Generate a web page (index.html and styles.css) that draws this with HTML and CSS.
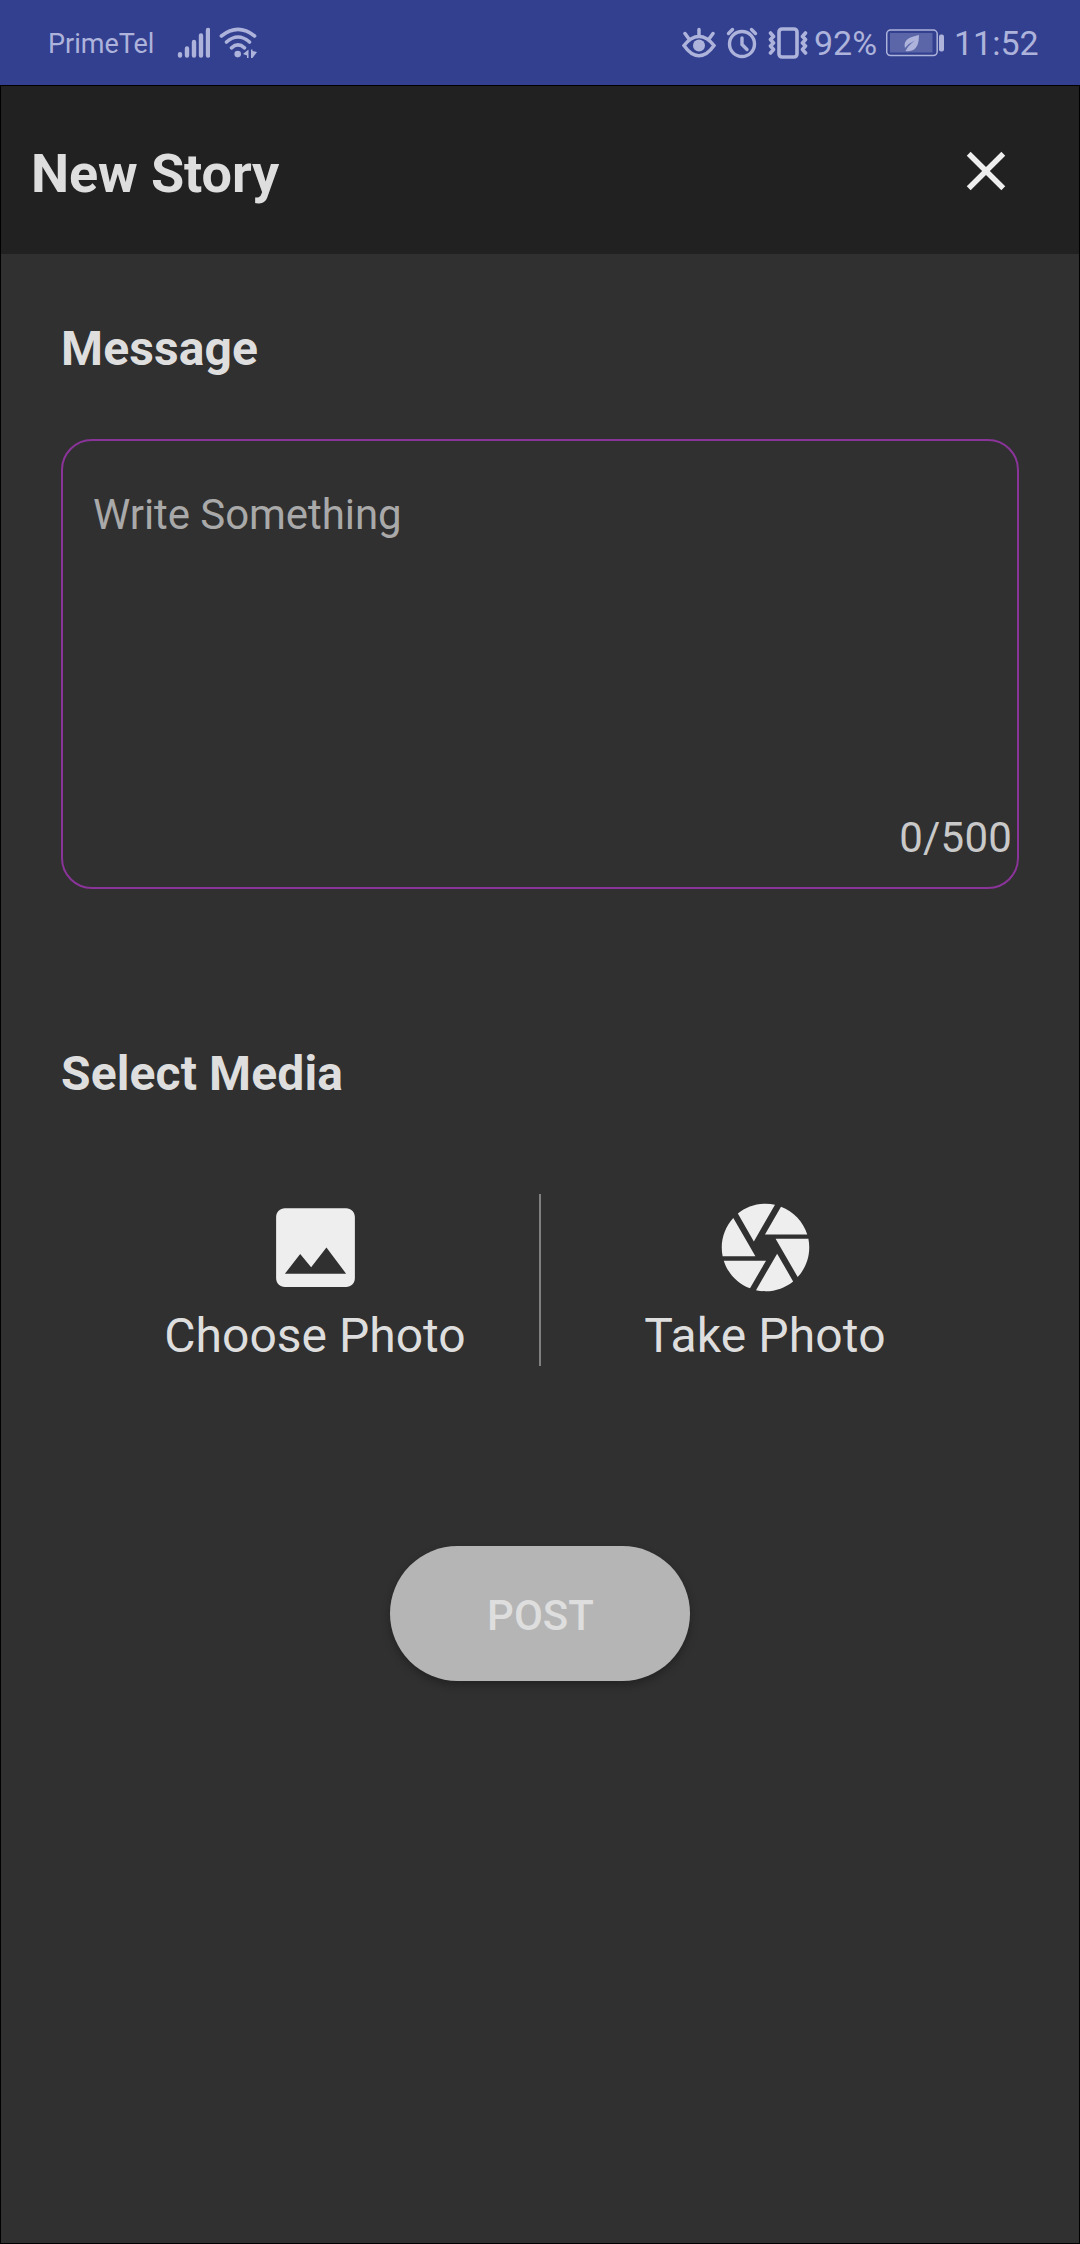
FILE: index.html
```html
<!DOCTYPE html>
<html lang="en">
<head>
<meta charset="utf-8">
<title>New Story</title>
<link rel="stylesheet" href="styles.css">
</head>
<body>
<div class="status">
  <span class="carrier">PrimeTel</span>
  <svg class="signal" width="34" height="32" viewBox="0 0 34 32" stroke="currentColor" stroke-width="4.4" stroke-linecap="round"><path d="M4 27.300v1.200M11 21.400v7.200M18 15v13.600M25 8.500v20.100M32 3v25.600"/></svg>
  <svg class="wifi" width="38" height="32" viewBox="0 0 38 32" fill="none" stroke="currentColor" stroke-width="3.600" stroke-linecap="round"><path d="M2.400 9Q19 -4.100 35.600 9M7.500 15Q19 5 30.500 15M12.500 20.800Q19 15 25.500 20.800"/><circle cx="18.700" cy="27.100" r="3.300" fill="currentColor" stroke="none"/><path d="M24 27l5.500-4.500v8.500h-1.500v-2.500zM32 22.500h1.500v1.500l4.500 1-4.500 6h-1.500z" fill="currentColor" stroke="none"/></svg>
  <svg class="eye" width="34" height="32" viewBox="0 0 34 32" fill="none" stroke="currentColor" stroke-width="3.500" stroke-linecap="round"><path d="M2 18.500Q9 9.500 17 9.500T32 18.500Q25 28.700 17 28.700T2 18.500zM17 2.500v6M3 6.500l4 5.500M31 6.500l-4 5.500"/><circle cx="17" cy="18.500" r="6" fill="currentColor" stroke="none"/></svg>
  <svg class="alarm" width="32" height="32" viewBox="0 0 32 32" fill="none" stroke="currentColor" stroke-width="3.400" stroke-linecap="round"><circle cx="16" cy="17" r="12.500"/><path d="M16 11v6.500l5 5M2.500 6.500l4-4M29.500 6.500l-4-4"/></svg>
  <svg class="vibrate" width="40" height="32" viewBox="0 0 40 32" fill="none" stroke="currentColor" stroke-width="3.600" stroke-linecap="round" stroke-linejoin="round"><rect x="11" y="2" width="18" height="28" rx="3"/><path d="M2.500 6l3 3.500-3 3 3 3.500-3 3 3 3.500-3 3.500M37.500 6l-3 3.500 3 3-3 3.500 3 3-3 3.500 3 3.500"/></svg>
  <span class="percent">92%</span>
  <svg class="battery" width="58" height="28" viewBox="0 0 58 28"><rect x=".7" y="1" width="50.500" height="25.600" rx="4" fill="none" stroke="currentColor" stroke-width="1.500"/><rect x="4" y="4" width="42.500" height="19.500" fill="currentColor" opacity=".33"/><path d="M33 6C25 8 19 9 18.500 16.500L19 19Q23 14 29 11.500Q22 16.500 19.500 22Q28 23.500 31.500 16Q33 12 33 6z" fill="currentColor"/><rect x="53" y="5.500" width="5" height="17" rx="2" fill="currentColor"/></svg>
  <time class="clock">11:52</time>
</div>
<main class="app">
  <header class="bar">
    <h1 class="title">New Story</h1>
    <svg class="close" width="66" height="66" viewBox="0 0 24 24" fill="#eee"><path d="M19 6.410L17.590 5 12 10.590 6.410 5 5 6.410 10.590 12 5 17.590 6.410 19 12 13.410 17.590 19 19 17.590 13.410 12z"/></svg>
  </header>
  <section class="content">
    <h2 class="heading">Message</h2>
    <div class="message-box">
      <p class="placeholder">Write Something</p>
      <span class="counter">0/500</span>
    </div>
    <h2 class="heading heading-media">Select Media</h2>
    <div class="media">
      <div class="option">
        <svg width="105" height="105" viewBox="0 0 24 24" fill="#eee"><path d="M21 19V5c0-1.100-.9-2-2-2H5c-1.100 0-2 .9-2 2v14c0 1.100.9 2 2 2h14c1.100 0 2-.9 2-2zM8.500 13.500l2.500 3.010L14.500 12l4.500 6H5l3.500-4.500z"/></svg>
        <span class="label">Choose Photo</span>
      </div>
      <div class="divider"></div>
      <div class="option">
        <svg width="105" height="105" viewBox="0 0 24 24" fill="#eee"><path d="M9.400 10.500l4.770-8.260C13.470 2.090 12.750 2 12 2c-2.400 0-4.600.85-6.320 2.250l3.660 6.350.06-.1zM21.540 9c-.92-2.920-3.150-5.260-6-6.340L11.880 9h9.660zm.26 1h-7.490l.29.5 4.760 8.250C21 16.970 22 14.610 22 12c0-.69-.07-1.350-.2-2zM8.540 12l-3.900-6.750C3.010 7.030 2 9.390 2 12c0 .69.070 1.350.2 2h7.490l-1.150-2zm-6.080 3c.92 2.920 3.150 5.260 6 6.340L12.120 15H2.460zm11.270 0l-3.900 6.760c.7.150 1.420.24 2.170.24 2.400 0 4.600-.85 6.320-2.250l-3.660-6.350-.93 1.600z"/></svg>
        <span class="label label-take">Take Photo</span>
      </div>
    </div>
    <button class="post" type="button">POST</button>
  </section>
</main>
</body>
</html>
```
FILE: styles.css
```css
* { box-sizing: border-box; margin: 0; }
body { background: #303030; color: #dedede; font-family: Roboto, sans-serif; }
svg { display: block; flex: none; }

.status { display: flex; align-items: center; height: 85px; padding: 0 43px 0 48px; background: #334090; color: #adb3da; white-space: nowrap; }
.carrier { width: 128px; font-size: 27px; line-height: 32px; padding-top: 2px; }
.wifi { margin-left: 9px; }
.eye { margin-left: auto; }
.alarm { margin-left: 10px; }
.vibrate { margin-left: 10px; }
.percent { width: 63px; margin-left: 6px; font-size: 34px; line-height: 40px; }
.battery { margin-left: 9px; }
.clock { width: 83px; margin-left: 10px; font-size: 34px; line-height: 40px; }

.app { height: 2159px; border: 1px solid #000; }
.bar { display: flex; align-items: center; justify-content: space-between; height: 168px; padding: 2px 60px 0 30px; background: #212121; }
.title { padding-top: 6px; font-size: 54px; line-height: 64px; font-weight: 700; letter-spacing: -.1px; }
.content { display: flex; flex-direction: column; padding: 63px 60px 0; }
.heading { font-size: 48px; line-height: 64px; font-weight: 700; letter-spacing: .12px; }
.message-box { display: flex; flex-direction: column; justify-content: space-between; height: 450px; margin-top: 58px; padding: 49px 5px 24px 30px; border: 2px solid #8a3499; border-radius: 31px; font-size: 42px; line-height: 50px; }
.placeholder { color: #a9a9a9; letter-spacing: -.07px; }
.counter { align-self: flex-end; color: #c9c9c9; letter-spacing: .2px; }
.heading-media { margin-top: 153px; }

.media { display: flex; align-self: center; width: 898px; height: 172px; margin-top: 88px; }
.option { display: flex; flex: 1; flex-direction: column; align-items: center; padding: 1px 0 0 1px; }
.label { margin: 8px 1px 0 0; font-size: 48px; line-height: 56px; }
.label-take { letter-spacing: .15px; }
.divider { width: 2px; background: #808080; }

.post { align-self: center; width: 300px; height: 135px; margin-top: 180px; padding: 4px 0 0 1px; border: 0; border-radius: 68px; background: #b5b5b5; color: #dedede; box-shadow: 0 4px 8px rgba(0, 0, 0, .28); font: 500 42px/50px Roboto, sans-serif; }
```
